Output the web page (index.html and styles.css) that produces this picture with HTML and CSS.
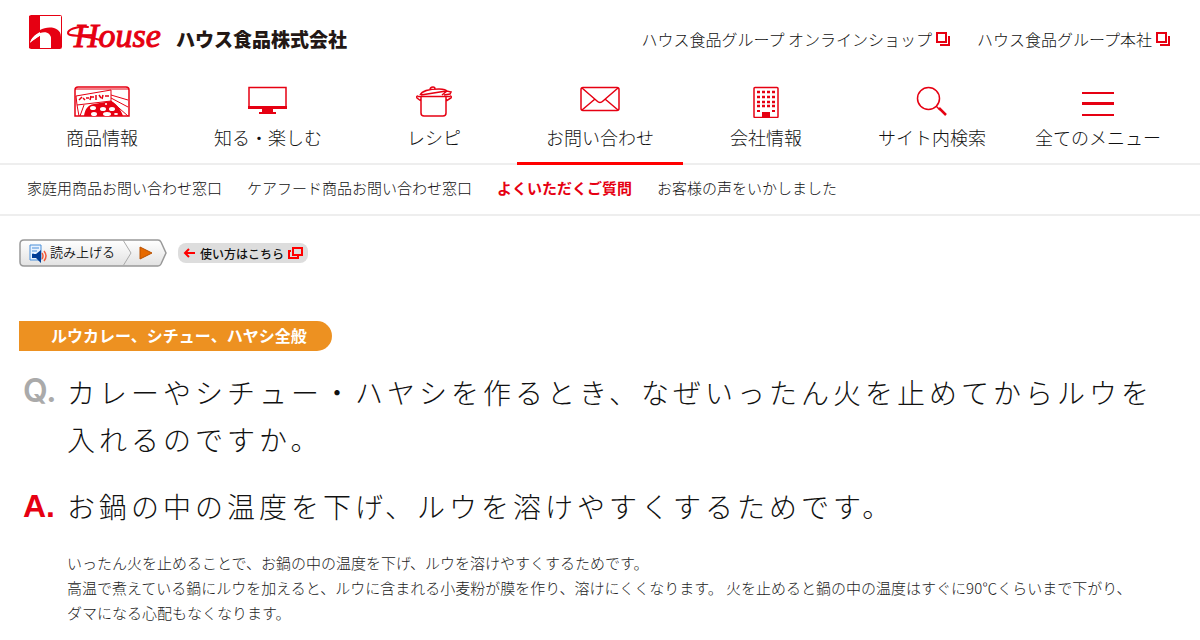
FILE: index.html
```html
<!DOCTYPE html>
<html lang="ja">
<head>
    <meta charset="UTF-8">
    <meta name="viewport" content="width=device-width, initial-scale=1.0">
    <title>よくいただくご質問 | ハウス食品</title>
    <link rel="stylesheet" href="styles.css">
</head>
<body>
    <header>
        <div class="header-top">
            <a href="#" class="logo">
                <svg class="logo-mark" width="33" height="34" viewBox="0 0 33 34">
                    <rect x="0.5" y="0.5" width="32" height="33" rx="1" fill="#fff" stroke="#e60012"/>
                    <path fill="#e60012" d="M0 1h11v16C5 20 2 24 1 28l10-7v12H0z"/>
                    <path fill="#e60012" d="M11 15c7-4 21-4 21 7v11H22V24c0-5-5-5-11-3z"/>
                    <path fill="#fff" d="M1 28c2-6 6-9 10-10 6-2 11 0 11 6v9H11V20z"/>
                    <path fill="#e60012" d="M11 19v14H1v-5c3-3 7-5 10-7z"/>
                </svg>
                <svg class="logo-script" width="98" height="44" viewBox="0 0 98 44">
                    <path d="M21 12C8 11 1 15 1 18c0 4 14 1 32 7" fill="none" stroke="#e60012" stroke-width="2" stroke-linecap="round"/>
                    <text x="7" y="32">House</text>
                </svg>
                <span class="logo-name">ハウス食品株式会社</span>
            </a>
            <div class="group-links">
                <a href="#">ハウス食品グループ オンラインショップ<svg width="15" height="14" viewBox="0 0 15 14"><path d="M1 1h9v9H1zM13 4v9H4" fill="none" stroke="#e60012" stroke-width="2"/></svg></a>
                <a href="#">ハウス食品グループ本社<svg width="15" height="14" viewBox="0 0 15 14"><path d="M1 1h9v9H1zM13 4v9H4" fill="none" stroke="#e60012" stroke-width="2"/></svg></a>
            </div>
        </div>

        <nav class="main-nav">
            <a href="#">
                <svg width="56" height="32" viewBox="0 0 56 32">
                    <path d="M1 30V4q0-3 3-3h48q3 0 3 3v26z" fill="#fff" stroke="#e60012" stroke-width="1.5"/>
                    <path d="M1 3h54M2 10L37 4v11L3 19zM37 9l17 5M37 12l17 9M37 15l17 15M3 19l2 11M10 19L6 30" fill="none" stroke="#e60012"/>
                    <path d="M10 30c1-6 3-11 10-12l17-3c6 3 10 9 12 15z" fill="#e60012"/>
                    <path d="M5 14l3-3M9 12l2 2M12 12h3M17 10l-1 4M16 11h4M22 9v5M25 9l2 3M29 9l-1 4M31 10h4" stroke="#e60012" stroke-width="1.5"/>
                    <g fill="#fff"><ellipse cx="19" cy="22" rx="3" ry="2"/><ellipse cx="29" cy="23" rx="3" ry="2"/><ellipse cx="38" cy="23" rx="3" ry="2"/><ellipse cx="20" cy="28" rx="3" ry="2"/><ellipse cx="33" cy="28" rx="4" ry="2"/><ellipse cx="42" cy="28" rx="2" ry="1"/><circle cx="32" cy="18" r="1"/></g>
                </svg>
                <span>商品情報</span>
            </a>
            <a href="#">
                <svg width="40" height="32" viewBox="0 0 40 32">
                    <path d="M1 21V1.5h37V21" fill="none" stroke="#e60012" stroke-width="1.5"/>
                    <path d="M0 20h39v3H0zM14 23h11v3H14zM11 26h17v2H11z" fill="#e60012"/>
                </svg>
                <span>知る・楽しむ</span>
            </a>
            <a href="#">
                <svg width="38" height="32" viewBox="0 0 38 32" fill="none" stroke="#e60012" stroke-width="1.5">
                    <path d="M6 11v16q0 3 3 3h19q3 0 3-3V11M3 10.5h32M3 10q-2 0-1 2l4 3M35 10q2 0 1 2l-5 3"/>
                    <path d="M5 9c2-4 10-6 19-6 5 0 8 1 7 2L6 9M15 4q0-3 3-3 2 0 2 2M27 9l5-4 4 1-1 2-6 1"/>
                </svg>
                <span>レシピ</span>
            </a>
            <a href="#" class="active">
                <svg width="40" height="32" viewBox="0 0 40 32" fill="none" stroke="#e60012" stroke-width="1.5">
                    <rect x="1" y="1.5" width="38" height="23" rx="2"/>
                    <path d="M2 2l15 13q3 3 6 0L38 2M2 24l13-11M38 24L25 13"/>
                </svg>
                <span>お問い合わせ</span>
            </a>
            <a href="#">
                <svg width="26" height="32" viewBox="0 0 26 32">
                    <rect x="1" y="1.5" width="24" height="30" rx="1" fill="none" stroke="#e60012" stroke-width="1.5"/>
                    <path d="M4 6h18M4 11h18M4 16h18M4 20h18" fill="none" stroke="#e60012" stroke-width="2.5" stroke-dasharray="3 2"/>
                    <path d="M4 24h3v2H4zM19 24h3v2h-3zM9 26h8v5H9z" fill="#e60012"/>
                </svg>
                <span>会社情報</span>
            </a>
            <a href="#">
                <svg width="32" height="32" viewBox="0 0 32 32" fill="none" stroke="#e60012">
                    <circle cx="12.5" cy="12.5" r="11" stroke-width="1.5"/>
                    <path d="M20 20l4 4" stroke-width="1.5"/>
                    <path d="M23 22l7 7" stroke-width="2.5"/>
                </svg>
                <span>サイト内検索</span>
            </a>
            <button type="button">
                <svg width="32" height="32" viewBox="0 0 32 32">
                    <path d="M0 6h32v2H0zM0 16h32v3H0zM0 28h32v2H0z" fill="#e60012"/>
                </svg>
                <span>全てのメニュー</span>
            </button>
        </nav>

        <nav class="sub-nav">
            <a href="#">家庭用商品お問い合わせ窓口</a>
            <a href="#">ケアフード商品お問い合わせ窓口</a>
            <a href="#" class="current">よくいただくご質問</a>
            <a href="#">お客様の声をいかしました</a>
        </nav>
    </header>

    <main>
        <div class="reader">
            <button type="button" class="reader-btn">
                <svg class="reader-shape" width="149" height="28" viewBox="0 0 149 28">
                    <defs>
                        <linearGradient id="shade" x1="0" y1="0" x2="0" y2="1">
                            <stop offset="0" stop-color="#fff"/>
                            <stop offset="1" stop-color="#e2e2e2"/>
                        </linearGradient>
                    </defs>
                    <path d="M5 1h134q2 0 3 2l5 11-5 11q-1 2-3 2H5q-4 0-4-4V5q0-4 4-4z" fill="url(#shade)" stroke="#999" stroke-width="1.5"/>
                    <path d="M104 1l8 13-8 13" fill="none" stroke="#aaa"/>
                    <path d="M11 6h11v15H11z" fill="#e8f2ff" stroke="#4a8fd8"/>
                    <path d="M13 9h7M13 12h5M13 15h2" stroke="#4a8fd8"/>
                    <path d="M13 15h4l5-4v13l-5-5h-4z" fill="#003c96"/>
                    <path d="M23 14q2 3 0 6M25 12q4 5 0 10" fill="none" stroke="#f05a3c" stroke-width="1.5"/>
                    <path d="M121 8l12 6-12 6z" fill="#e66a00" stroke="#b85000"/>
                </svg>
                <span>読み上げる</span>
            </button>
            <a href="#" class="howto">
                <svg width="13" height="12" viewBox="0 0 13 12"><path d="M12 6H2M6 2L2 6l4 4" fill="none" stroke="#f00" stroke-width="2"/></svg>
                使い方はこちら
                <svg width="15" height="12" viewBox="0 0 15 12"><path d="M5 1h9v7H5zM3 4H1v7h9V9" fill="none" stroke="#f00" stroke-width="2"/></svg>
            </a>
        </div>

        <p class="category">ルウカレー、シチュー、ハヤシ全般</p>

        <div class="qa">
            <span class="mark mark-q">Q.</span>
            <h1>カレーやシチュー・ハヤシを作るとき、なぜいったん火を止めてからルウを入れるのですか。</h1>
        </div>
        <div class="qa answer">
            <span class="mark mark-a">A.</span>
            <div>
                <h2>お鍋の中の温度を下げ、ルウを溶けやすくするためです。</h2>
                <p>いったん火を止めることで、お鍋の中の温度を下げ、ルウを溶けやすくするためです。<br>
                高温で煮えている鍋にルウを加えると、ルウに含まれる小麦粉が膜を作り、溶けにくくなります。 火を止めると鍋の中の温度はすぐに90℃くらいまで下がり、<br>
                ダマになる心配もなくなります。</p>
            </div>
        </div>
    </main>
</body>
</html>
```
FILE: styles.css
```css
* {
    margin: 0;
    padding: 0;
    box-sizing: border-box;
}

body {
    font-family: 'Noto Sans CJK JP', sans-serif;
    font-weight: 300;
    font-size: 15px;
    color: #111;
    background: #fff;
}

a {
    color: inherit;
    text-decoration: none;
}

button {
    font: inherit;
    color: inherit;
    background: none;
    border: none;
    cursor: pointer;
}

/* header */
.header-top {
    display: flex;
    justify-content: space-between;
    align-items: flex-start;
    height: 79px;
    padding: 15px 29px 0;
}

.logo {
    display: flex;
    align-items: flex-start;
}

.logo-script {
    margin-left: 5px;
    font: italic 34px 'Liberation Serif', serif;
    fill: #e60012;
}

.logo-script text {
    stroke: #e60012;
}

.logo-name {
    margin-left: 11px;
    padding-top: 10px;
    font-size: 19px;
    font-weight: 900;
    line-height: 28px;
    color: #231815;
}

.group-links {
    display: flex;
    gap: 26px;
    padding-top: 12px;
    font-size: 16px;
    line-height: 24px;
}

.group-links a {
    display: flex;
    align-items: center;
    gap: 4px;
}

.main-nav {
    display: flex;
    padding: 0 19px;
    border-bottom: 2px solid #eee;
}

.main-nav a,
.main-nav button {
    flex: 1;
    display: flex;
    flex-direction: column;
    align-items: center;
    gap: 7px;
    margin-bottom: -2px;
    padding: 7px 0 13px;
    border-bottom: 3px solid transparent;
    font-size: 18px;
    line-height: 24px;
}

.main-nav .active {
    border-color: #f00;
}

.sub-nav {
    display: flex;
    gap: 25px;
    padding: 11px 27px 14px;
    border-bottom: 2px solid #eee;
    line-height: 24px;
}

.sub-nav .current {
    font-weight: 700;
    color: #e60012;
}

/* contents */
main {
    padding: 23px 19px;
}

.reader {
    display: flex;
    align-items: center;
    gap: 10px;
}

.reader-btn {
    display: grid;
    align-items: center;
    font-size: 13px;
    font-weight: 350;
    line-height: 18px;
}

.reader-btn > * {
    grid-area: 1 / 1;
}

.reader-btn span {
    padding: 0 0 2px 31px;
    text-align: left;
}

.howto {
    display: flex;
    align-items: center;
    gap: 4px;
    height: 20px;
    padding: 0 5px;
    border-radius: 8px;
    background: #ddd;
    font-size: 12px;
    font-weight: 500;
}

.category {
    width: fit-content;
    margin-top: 54px;
    padding: 0 25px 2px 32px;
    border-radius: 0 15px 15px 0;
    background: #ed9121;
    color: #fff;
    font-size: 16px;
    font-weight: 700;
    line-height: 28px;
}

.qa {
    display: grid;
    grid-template-columns: 48px 1fr;
    margin-top: 18px;
}

.answer {
    margin-top: 20px;
}

.mark {
    padding-left: 4px;
    font-family: 'Liberation Sans', sans-serif;
    font-size: 32px;
    font-weight: 700;
    line-height: 47px;
}

.mark-q {
    font-family: 'Inter', sans-serif;
    font-weight: 600;
    line-height: 43px;
    color: #aaa;
}

.mark-a {
    color: #e60012;
}

h1,
h2 {
    font-size: 28px;
    font-weight: 300;
    line-height: 47px;
    letter-spacing: 4px;
}

.answer p {
    margin-top: 20px;
    line-height: 25px;
    color: #222;
}
```
